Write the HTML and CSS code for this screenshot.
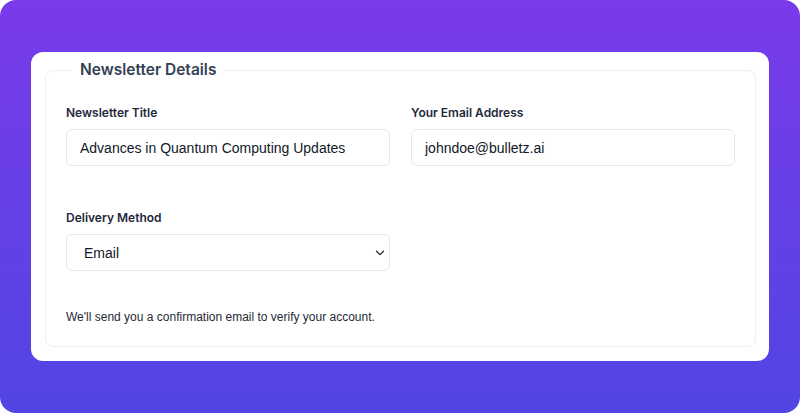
FILE: index.html
```html
<!DOCTYPE html>
<html lang="en">
<head>
<meta charset="utf-8">
<title>Newsletter Details</title>
<link rel="stylesheet" href="styles.css">
</head>
<body>
<div class="frame">
  <form class="card">
    <fieldset class="group">
      <legend class="legend">Newsletter Details</legend>
      <div class="grid">
        <div class="field">
          <label class="label" for="title">Newsletter Title</label>
          <input class="control" id="title" type="text" value="Advances in Quantum Computing Updates">
        </div>
        <div class="field">
          <label class="label" for="email">Your Email Address</label>
          <input class="control" id="email" type="email" value="johndoe@bulletz.ai">
        </div>
        <div class="field">
          <label class="label" for="method">Delivery Method</label>
          <div class="select-wrap">
            <select class="control select" id="method">
              <option>Email</option>
            </select>
            <svg class="chev" width="10" height="6" viewBox="0 0 10 6"><path d="M1.5 1.2 5 4.6 8.5 1.2" fill="none" stroke="#1f2937" stroke-width="1.3" stroke-linecap="round" stroke-linejoin="round"/></svg>
          </div>
        </div>
      </div>
      <p class="note">We'll send you a confirmation email to verify your account.</p>
    </fieldset>
  </form>
</div>
</body>
</html>
```
FILE: styles.css
```css
* { box-sizing: border-box; }
html, body { margin: 0; padding: 0; background: #ffffff; }
body { font-family: Inter, "Noto Sans", sans-serif; }
.frame {
  width: 800px;
  height: 413px;
  border-radius: 16px;
  background: linear-gradient(180deg, #7a3aea 0%, #5145e3 100%);
  padding: 52px 31px;
}
.card {
  background: #ffffff;
  border-radius: 12px;
  padding: 6px 14px 14px;
  height: 309px;
}
.group {
  margin: 0;
  border: 1px solid #eeeff2;
  border-radius: 8px;
  padding: 22px 20px 0 20px;
  height: 289px;
}
.legend {
  margin-left: 6px;
  padding: 0 8px;
  font-size: 15.5px;
  font-weight: 600;
  color: #334155;
  line-height: 24px;
}
.grid {
  display: grid;
  grid-template-columns: 324px 324px;
  column-gap: 21px;
  row-gap: 43px;
}
.field { display: flex; flex-direction: column; }
.label {
  font-size: 12px;
  font-weight: 600;
  color: #1e293b;
  line-height: 17px;
  margin-bottom: 8px;
}
.control {
  width: 100%;
  height: 37px;
  border: 1px solid #e5e7eb;
  border-radius: 6px;
  padding: 0 13px;
  font-family: "Liberation Sans", Arial, sans-serif;
  font-size: 14px;
  color: #111827;
  background: #ffffff;
  outline: none;
}
.select { padding-left: 17px; }
.select-wrap { position: relative; }
.select { appearance: none; -webkit-appearance: none; }
.chev { position: absolute; right: 5px; top: 16px; }
.note {
  margin: 38px 0 0;
  font-family: "Liberation Sans", Arial, sans-serif;
  font-size: 12px;
  line-height: 17px;
  color: #1f2937;
}
```
